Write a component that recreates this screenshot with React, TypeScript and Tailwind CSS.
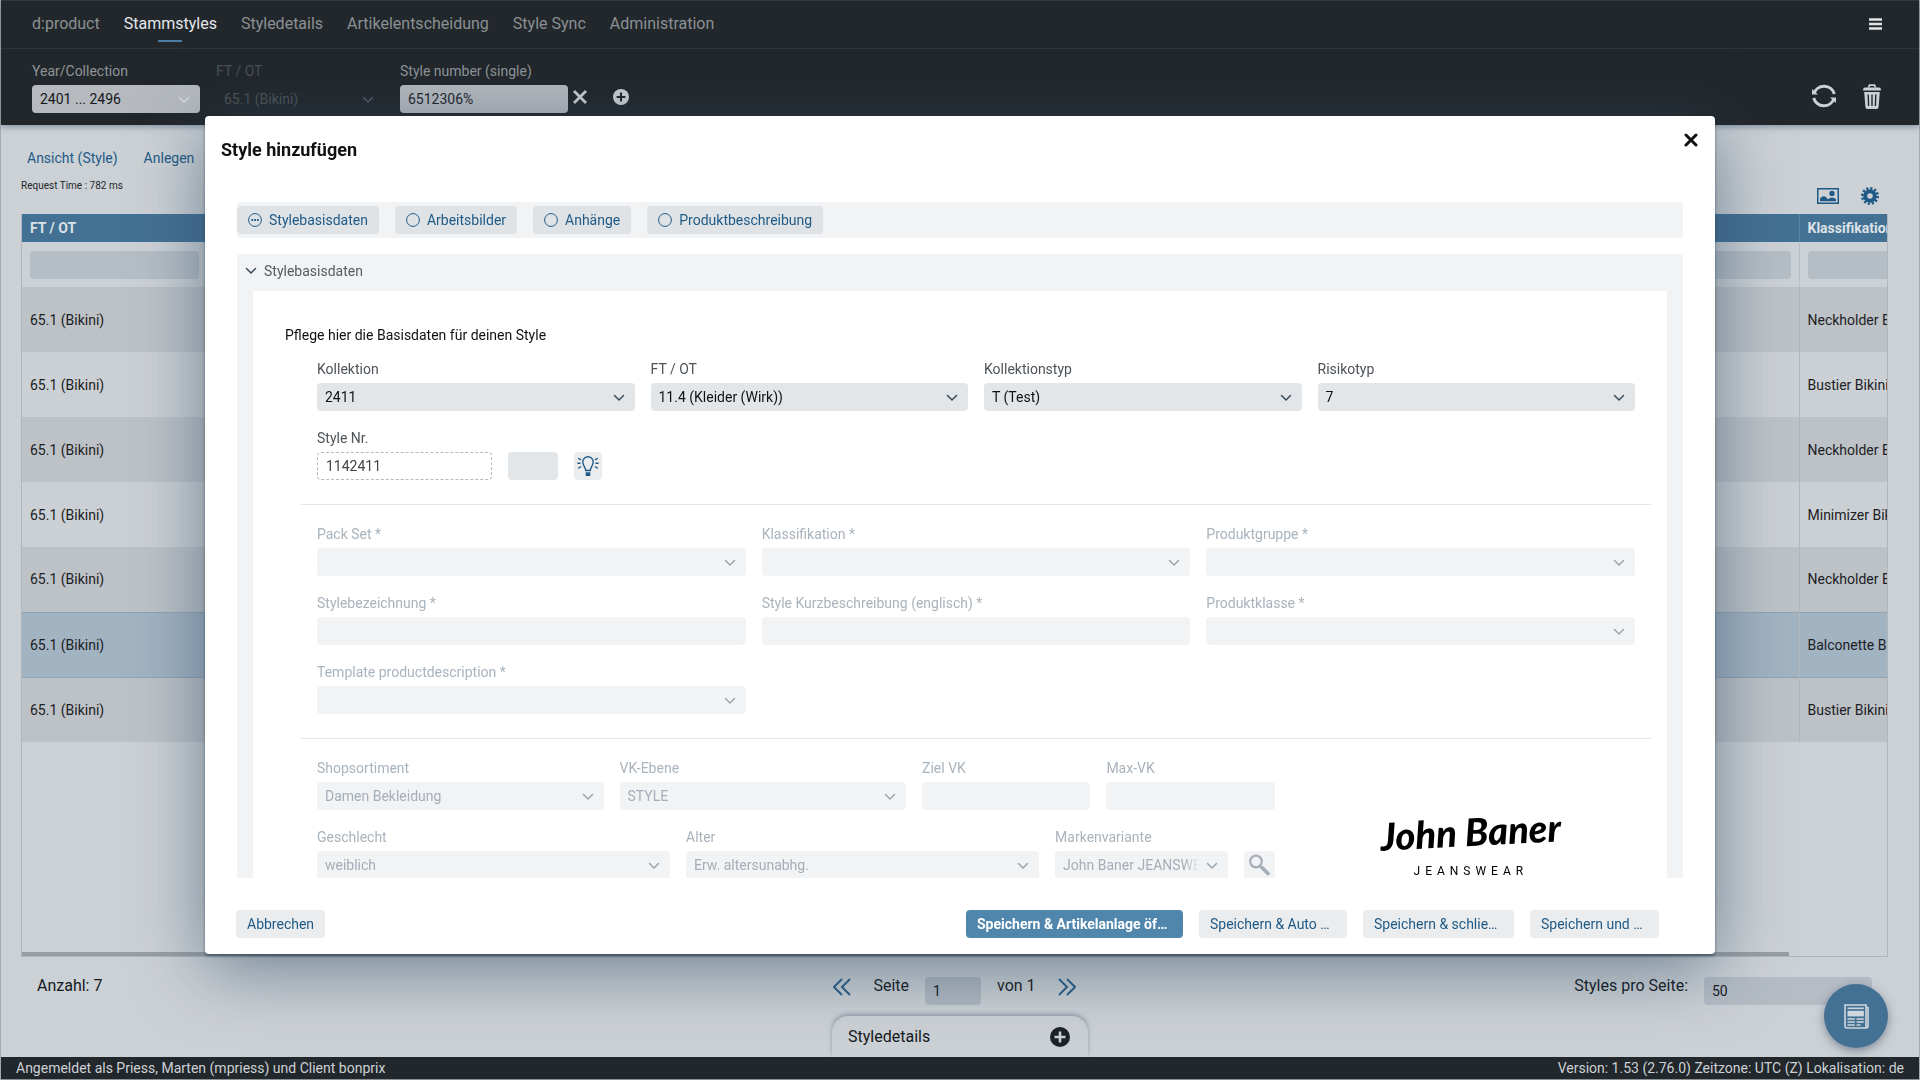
import React, { useId } from 'react';

const NAV_ITEMS = ['d:product', 'Stammstyles', 'Styledetails', 'Artikelentscheidung', 'Style Sync', 'Administration'];

const ROWS = [
  { ft: '65.1 (Bikini)', klass: 'Neckholder Bikini' },
  { ft: '65.1 (Bikini)', klass: 'Bustier Bikini' },
  { ft: '65.1 (Bikini)', klass: 'Neckholder Bikini' },
  { ft: '65.1 (Bikini)', klass: 'Minimizer Bikini' },
  { ft: '65.1 (Bikini)', klass: 'Neckholder Bikini' },
  { ft: '65.1 (Bikini)', klass: 'Balconette Bikini', selected: true },
  { ft: '65.1 (Bikini)', klass: 'Bustier Bikini' },
];

function ChevronDown({ className = '' }: { className?: string }) {
  return (
    <svg viewBox="0 0 12 8" className={`w-3 h-2 ${className}`} fill="none" stroke="currentColor" strokeWidth="1.5" strokeLinecap="round">
      <path d="M1.5 1.5 L6 6 L10.5 1.5" />
    </svg>
  );
}

function PlusCircle({ className, cross }: { className: string; cross: string }) {
  return (
    <svg viewBox="0 0 20 20" className={className}>
      <circle cx="10" cy="10" r="10" fill="currentColor" />
      <path d="M10 4.5 V15.5 M4.5 10 H15.5" stroke={cross} strokeWidth="2.6" />
    </svg>
  );
}

function CloseIcon({ className }: { className: string }) {
  return (
    <svg viewBox="0 0 14 14" className={className} fill="none" stroke="currentColor" strokeWidth="3" strokeLinecap="round">
      <path d="M2 2 L12 12 M12 2 L2 12" />
    </svg>
  );
}

function RefreshIcon() {
  return (
    <svg viewBox="0 0 26 26" className="w-[26px] h-[26px]">
      <g fill="none" stroke="currentColor" strokeWidth="3">
        <path d="M3 10.5 A10.6 10.6 0 0 1 23.3 11" />
        <path d="M23 15.5 A10.6 10.6 0 0 1 2.7 15" />
      </g>
      <path d="M1 6 V11.6 H7 Z" fill="currentColor" />
      <path d="M25 20 V14.4 H19 Z" fill="currentColor" />
    </svg>
  );
}

function TrashIcon() {
  return (
    <svg viewBox="0 0 18 25" className="w-[18px] h-[25px]">
      <path d="M5.5 3.5 L6.5 1.2 H11.5 L12.5 3.5" fill="none" stroke="currentColor" strokeWidth="1.8" />
      <path d="M2 3.5 H16 Q18 3.5 18 6.5 H0 Q0 3.5 2 3.5 Z" fill="currentColor" />
      <path d="M1.2 8 H16.8 L15.6 23 Q15.4 25 13.6 25 H4.4 Q2.6 25 2.4 23 Z" fill="currentColor" />
      <path d="M5.2 10.5 L5.6 22 M9 10.5 V22 M12.8 10.5 L12.4 22" stroke="#22272b" strokeWidth="1.4" />
    </svg>
  );
}

function ImageIcon() {
  return (
    <svg viewBox="0 0 22 16" className="w-[22px] h-4">
      <rect x="0.75" y="0.75" width="20.5" height="14.5" fill="none" stroke="currentColor" strokeWidth="1.5" />
      <circle cx="15" cy="5.4" r="2.6" fill="currentColor" />
      <path d="M3 13.2 V10.6 Q6.5 6.5 9.5 9.8 L11 11.2 Q15 7.8 19 11 V13.2 Z" fill="currentColor" />
    </svg>
  );
}

function GearIcon() {
  return (
    <svg viewBox="0 0 18 18" className="w-[18px] h-[18px]" fill="none" stroke="currentColor">
      <circle cx="9" cy="9" r="4.8" strokeWidth="4" />
      <circle cx="9" cy="9" r="7.7" strokeWidth="2.6" strokeDasharray="2.2 1.83" />
    </svg>
  );
}

function BulbIcon() {
  return (
    <svg viewBox="0 0 22 22" className="w-[22px] h-[22px]" fill="none" stroke="currentColor" strokeWidth="1.4" strokeLinecap="round">
      <path d="M8.7 15.5 C8.7 12.5 5.8 11 5.8 7 A5.2 5.2 0 0 1 16.2 7 C16.2 11 13.3 12.5 13.3 15.5 Z" />
      <path d="M9.6 18.2 H12.4 V20.2 H9.6 Z" fill="currentColor" strokeWidth="1.8" />
      <path d="M0.9 8.3 H3 M1.6 3.5 L3.6 4.6 M1.6 13 L3.6 11.9 M21.1 8.3 H19 M20.4 3.5 L18.4 4.6 M20.4 13 L18.4 11.9" />
    </svg>
  );
}

function SearchIcon() {
  return (
    <svg viewBox="0 0 22 22" className="w-[22px] h-[22px]" fill="none" stroke="currentColor">
      <circle cx="8" cy="7.5" r="5.8" strokeWidth="2.2" />
      <path d="M12 11.8 L14 13.8" strokeWidth="2" />
      <path d="M14.2 13.8 L20 19.6" strokeWidth="3.6" strokeLinecap="round" />
    </svg>
  );
}

function NewsIcon() {
  return (
    <svg viewBox="0 0 25 25" className="w-[25px] h-[25px]" fill="none" stroke="currentColor" strokeWidth="1.6">
      <path d="M22 3.5 H24 V22 Q24 24 22 24 H3 Q1 24 1 22 V1 H22 V22 Q22 24 23 23.4" />
      <path d="M3.5 4.3 H19.8" />
      <rect x="3.5" y="6.8" width="16.4" height="5.6" fill="currentColor" stroke="none" />
      <path d="M3.5 15 H10.8 M3.5 18 H10.8 M3.5 21 H10.8 M12.6 15 H19.8 M12.6 18 H19.8 M12.6 21 H16.5" />
    </svg>
  );
}

function DoubleChevron({ flip = false }: { flip?: boolean }) {
  return (
    <svg viewBox="0 0 18 18" className="w-[18px] h-[18px]" fill="none" stroke="currentColor" strokeWidth="2">
      <path d={flip ? 'M1 1 L9 9 L1 17 M9 1 L17 9 L9 17' : 'M17 1 L9 9 L17 17 M9 1 L1 9 L9 17'} />
    </svg>
  );
}

type FieldProps = {
  label: string;
  value?: string;
  select?: boolean;
  disabled?: boolean;
  dashed?: boolean;
  fade?: boolean;
  className?: string;
};

function Field({ label, value = '', select, disabled, dashed, fade, className = '' }: FieldProps) {
  const id = useId();
  const look = disabled ? 'bg-[#f2f3f5] text-[#a4aeb8]' : dashed ? 'border border-dashed border-[#b4babf] text-[#444]' : 'bg-[#e3e6e9] text-[#111]';
  return (
    <div className={`min-w-0 ${className}`}>
      <label htmlFor={id} className={`block h-5 leading-[22px] mb-[5px] whitespace-nowrap ${disabled ? 'text-[#a9b3bc]' : 'text-[#4d5358]'}`}>
        {label}
      </label>
      <div className="relative">
        {select ? (
          <select id={id} disabled={disabled} defaultValue={value} className={`appearance-none block w-full h-7 rounded-sm pl-2 pr-7 ${look}`}>
            <option value={value}>{value}</option>
          </select>
        ) : (
          <input id={id} type="text" disabled={disabled} defaultValue={value} className={`block w-full h-7 rounded-sm px-2 ${look}`} />
        )}
        {fade && <span className="absolute right-7 top-0 h-7 w-4 bg-linear-to-r from-[#f2f3f5]/0 to-[#f2f3f5]" />}
        {select && <ChevronDown className={`absolute right-[10px] top-[11px] pointer-events-none ${disabled ? 'text-[#9aa5b0]' : 'text-[#3a4a5a]'}`} />}
      </div>
    </div>
  );
}

function TabButton({ children, active }: { children: React.ReactNode; active?: boolean }) {
  return (
    <button type="button" className="flex items-center gap-[7px] h-7 px-[11px] rounded-sm bg-[#dfe3e6] text-[#1f5a87]">
      <svg viewBox="0 0 14 14" className="w-[14px] h-[14px]" fill="none" stroke="currentColor">
        <circle cx="7" cy="7" r="6.4" />
        {active && <path d="M3.4 7 H5.1 M6.2 7 H7.9 M9 7 H10.7" strokeWidth="1.8" />}
      </svg>
      {children}
    </button>
  );
}

function TopBar() {
  return (
    <header className="bg-[#22272b] border-t border-[#33383c] shadow-[0_2px_6px_rgba(60,85,110,0.5)]">
      <div className="flex items-center justify-between h-12 pl-[31px] pr-[37px] pb-px border-b border-[#30353a]">
        <nav className="flex items-center gap-6 h-full text-base">
          {NAV_ITEMS.map((item) => (
            <a key={item} href="#" className={`relative flex items-center h-full ${item === 'Stammstyles' ? 'text-[#e4e8eb]' : 'text-[#8b9094]'}`}>
              {item}
              {item === 'Stammstyles' && <span className="absolute left-1/2 -translate-x-1/2 bottom-[5px] w-6 h-[2px] bg-[#4a7ea5]" />}
            </a>
          ))}
        </nav>
        <button type="button" aria-label="Menu" className="text-[#dfe3e6]">
          <svg viewBox="0 0 13 12" className="w-[13px] h-3" stroke="currentColor" strokeWidth="2.4">
            <path d="M0 1.5 H13 M0 6 H13 M0 10.5 H13" />
          </svg>
        </button>
      </div>
      <div className="flex items-start h-[76px] pt-3 pl-[31px] pr-[38px]">
        <div className="w-[168px]">
          <label htmlFor="year" className="block h-5 leading-5 mb-1 text-[#8f9498]">Year/Collection</label>
          <div className="relative">
            <select id="year" className="appearance-none block w-full h-7 rounded-sm pl-2 pr-7 bg-[#b6babf] text-[#15181b]">
              <option>2401 ... 2496</option>
            </select>
            <ChevronDown className="absolute right-[10px] top-[11px] text-[#d6dade] pointer-events-none" />
          </div>
        </div>
        <div className="w-[168px] ml-4">
          <label htmlFor="ft" className="block h-5 leading-5 mb-1 text-[#4b5054]">FT / OT</label>
          <div className="relative">
            <select id="ft" disabled className="appearance-none block w-full h-7 rounded-sm pl-2 pr-7 text-[#4b5258]">
              <option>65.1 (Bikini)</option>
            </select>
            <ChevronDown className="absolute right-[10px] top-[11px] text-[#565c61] pointer-events-none" />
          </div>
        </div>
        <div className="w-[168px] ml-4">
          <label htmlFor="stylenr" className="block h-5 leading-5 mb-1 text-[#8f9498]">Style number (single)</label>
          <input id="stylenr" type="text" defaultValue="6512306%" className="block w-full h-7 rounded-sm px-2 bg-[#b6babf] text-[#22262a]" />
        </div>
        <div className="flex items-center gap-[26px] ml-[5px] mt-7">
          <button type="button" aria-label="Filter entfernen" className="text-[#ccd1d5]">
            <svg viewBox="0 0 14 14" className="w-[14px] h-[14px]" stroke="currentColor" strokeWidth="2.8">
              <path d="M1 1 L13 13 M13 1 L1 13" />
            </svg>
          </button>
          <button type="button" aria-label="Filter hinzufügen" className="text-[#ccd1d5]">
            <PlusCircle className="w-4 h-4" cross="#22272b" />
          </button>
        </div>
        <div className="flex items-center gap-[26px] ml-auto mt-[22px] text-[#ccd1d5]">
          <button type="button" aria-label="Aktualisieren"><RefreshIcon /></button>
          <button type="button" aria-label="Löschen"><TrashIcon /></button>
        </div>
      </div>
    </header>
  );
}

function StyleTable() {
  return (
    <div className="flex-1 flex flex-col ml-5 mr-[31px] border-x border-b border-[#b0b6bb] overflow-hidden">
      <table className="w-full table-fixed border-collapse">
        <thead>
          <tr className="h-7 bg-[#437194] text-left text-[#dde2e6]">
            <th className="w-[186px] pl-2 font-bold">FT / OT</th>
            <th></th>
            <th className="w-[88px] pl-2 font-bold border-l border-[#5a83a3] overflow-hidden whitespace-nowrap">Klassifikation</th>
          </tr>
          <tr className="h-[45px]">
            <td className="pl-2">
              <input aria-label="Filter FT / OT" className="block w-[169px] h-7 rounded-sm bg-[#b6bec5]" />
            </td>
            <td className="px-2">
              <input aria-label="Filter" className="block w-full h-7 rounded-sm bg-[#b6bec5]" />
            </td>
            <td className="pl-2 border-l border-[#b8bec3] overflow-hidden">
              <input aria-label="Filter Klassifikation" className="block w-[168px] h-7 rounded-sm bg-[#b6bec5]" />
            </td>
          </tr>
        </thead>
        <tbody>
          {ROWS.map((row, i) => (
            <tr
              key={i}
              className={`h-[65px] text-[#1c2024] ${row.selected ? 'bg-[#a2b3c2] border-y border-[#8fa5b7]' : i % 2 === 0 ? 'bg-[#bdc2c7]' : 'bg-[#cbd0d4]'}`}
            >
              <td className="pl-2">{row.ft}</td>
              <td></td>
              <td className="pl-2 border-l border-[#b0b6bc] overflow-hidden whitespace-nowrap">{row.klass}</td>
            </tr>
          ))}
        </tbody>
      </table>
      <div className="mt-auto h-1 mr-[98px] bg-[#999ea3]" />
    </div>
  );
}

function Logo() {
  return (
    <div className="flex flex-col items-center self-end text-black">
      <span className="mb-2 font-['Lato'] font-black italic text-[38px] leading-[48px] -rotate-3 whitespace-nowrap">John Baner</span>
      <span className="text-xs leading-4 tracking-[5px]">JEANSWEAR</span>
    </div>
  );
}

function StyleDialog() {
  return (
    <div className="fixed inset-0 z-20 flex px-[205px] pt-[116px] pb-[126px]">
      <div
        role="dialog"
        aria-labelledby="dialog-title"
        className="flex-1 min-w-0 flex flex-col bg-white rounded shadow-[0_2px_3px_rgba(40,55,70,0.6),0_14px_70px_rgba(45,72,98,0.6)]"
      >
        <div className="flex items-start justify-between h-[86px] shrink-0 pl-4 pr-[17px] pt-[17px]">
          <h2 id="dialog-title" className="text-lg leading-[34px] font-bold text-[#111]">Style hinzufügen</h2>
          <button type="button" aria-label="Schließen" className="text-[#111]">
            <CloseIcon className="w-[14px] h-[14px]" />
          </button>
        </div>

        <div className="flex-1 min-h-0 overflow-hidden mx-8">
          <div className="flex items-center gap-4 h-9 rounded bg-[#f2f3f5]">
            <TabButton active>Stylebasisdaten</TabButton>
            <TabButton>Arbeitsbilder</TabButton>
            <TabButton>Anhänge</TabButton>
            <TabButton>Produktbeschreibung</TabButton>
          </div>

          <section className="mt-4 px-4 pb-4 rounded bg-[#f2f3f5]">
            <h3 className="-ml-2 flex items-center gap-[7px] h-[37px] pb-1 text-[#565b60]">
              <ChevronDown className="text-[#3a4a5a]" />
              Stylebasisdaten
            </h3>
            <div className="bg-white pt-[34px] pb-8">
              <p className="px-8 mb-[13px] leading-5 text-[#111]">Pflege hier die Basisdaten für deinen Style</p>

              <div className="flex flex-col gap-4 pl-16 pr-8">
                <div className="grid grid-cols-4 gap-4">
                  <Field label="Kollektion" value="2411" select />
                  <Field label="FT / OT" value="11.4 (Kleider (Wirk))" select />
                  <Field label="Kollektionstyp" value="T (Test)" select />
                  <Field label="Risikotyp" value="7" select />
                </div>
                <div className="flex items-end gap-4">
                  <Field label="Style Nr." value="1142411" dashed className="w-[175px]" />
                  <input aria-label="Style Nr. Zusatz" className="w-[50px] h-7 rounded-sm bg-[#e3e6e9]" />
                  <button type="button" aria-label="Vorschlag" className="flex items-center justify-center w-7 h-7 rounded-sm bg-[#ebecee] text-[#1f5a87]">
                    <BulbIcon />
                  </button>
                </div>
              </div>

              <hr className="mt-6 mb-[18px] ml-12 mr-4 border-0 h-px bg-[#e3e5e8]" />

              <div className="grid grid-cols-3 gap-4 pl-16 pr-8">
                <Field label="Pack Set *" select disabled />
                <Field label="Klassifikation *" select disabled />
                <Field label="Produktgruppe *" select disabled />
                <Field label="Stylebezeichnung *" disabled />
                <Field label="Style Kurzbeschreibung (englisch) *" disabled />
                <Field label="Produktklasse *" select disabled />
                <Field label="Template productdescription *" select disabled />
              </div>

              <hr className="mt-6 mb-[18px] ml-12 mr-4 border-0 h-px bg-[#e3e5e8]" />

              <div className="grid grid-cols-[957fr_360fr] gap-4 pl-16 pr-4">
                <div className="flex flex-col gap-4">
                  <div className="grid grid-cols-[286fr_286fr_168fr_168fr] gap-4">
                    <Field label="Shopsortiment" value="Damen Bekleidung" select disabled />
                    <Field label="VK-Ebene" value="STYLE" select disabled />
                    <Field label="Ziel VK" disabled />
                    <Field label="Max-VK" disabled />
                  </div>
                  <div className="grid grid-cols-[352fr_352fr_172fr_31fr] items-end gap-4">
                    <Field label="Geschlecht" value="weiblich" select disabled />
                    <Field label="Alter" value="Erw. altersunabhg." select disabled />
                    <Field label="Markenvariante" value="John Baner JEANSWEAR" select disabled fade />
                    <button type="button" aria-label="Suchen" className="flex items-center justify-center h-7 rounded-sm bg-[#f2f3f5] text-[#a4aeb8]">
                      <SearchIcon />
                    </button>
                  </div>
                </div>
                <Logo />
              </div>
            </div>
          </section>
        </div>

        <div className="flex items-center gap-4 shrink-0 pt-8 pb-4 pl-[31px] pr-14 text-[#1f5a87] text-left whitespace-nowrap">
          <button type="button" className="h-7 px-[11px] rounded-sm bg-[#ebecee] mr-auto">Abbrechen</button>
          <button type="button" className="w-[217px] h-7 px-[11px] rounded-sm bg-[#5086ab] text-white font-bold text-left">Speichern &amp; Artikelanlage öf…</button>
          <button type="button" className="w-[148px] h-7 px-[11px] rounded-sm bg-[#ebecee] text-left">Speichern &amp; Auto …</button>
          <button type="button" className="w-[151px] h-7 px-[11px] rounded-sm bg-[#ebecee] text-left">Speichern &amp; schlie…</button>
          <button type="button" className="w-[129px] h-7 px-[11px] rounded-sm bg-[#ebecee] text-left">Speichern und …</button>
        </div>
      </div>
    </div>
  );
}

export default function App() {
  return (
    <div className="min-h-screen flex flex-col bg-[#ccd1d5] border-x border-[#a5aaaf] font-['Roboto',sans-serif] text-sm">
      <TopBar />

      <main className="flex-1 flex flex-col">
        <div className="flex justify-between h-[89px] pt-5 pl-5 pr-10 text-[#1f5a87]">
          <div>
            <div className="flex gap-[26px] pl-[6px] leading-[26px]">
              <a href="#">Ansicht (Style)</a>
              <a href="#">Anlegen</a>
            </div>
            <p className="mt-[3px] text-[10px] leading-6 text-[#22262a]">Request Time : 782 ms</p>
          </div>
          <div className="flex items-center gap-[22px] self-end mb-[9px]">
            <button type="button" aria-label="Bilder"><ImageIcon /></button>
            <button type="button" aria-label="Einstellungen"><GearIcon /></button>
          </div>
        </div>

        <StyleTable />

        <div className="grid grid-cols-[1fr_auto_1fr] items-start h-[59px] pt-5 pl-9 pr-[47px] text-base leading-[18px] text-[#15191d]">
          <span>Anzahl: 7</span>
          <div className="flex items-start">
            <button type="button" aria-label="Zurück" className="mr-[22px] mt-px text-[#2a5f8a]"><DoubleChevron /></button>
            <label htmlFor="page" className="mr-4">Seite</label>
            <input id="page" defaultValue="1" className="w-14 h-7 mr-4 px-2 rounded-sm bg-[#b1b9c1] text-sm" />
            <span>von 1</span>
            <button type="button" aria-label="Weiter" className="ml-[22px] mt-px text-[#2a5f8a]"><DoubleChevron flip /></button>
          </div>
          <div className="flex items-start justify-end gap-4">
            <label htmlFor="perpage">Styles pro Seite:</label>
            <select id="perpage" className="appearance-none w-[168px] h-7 px-2 rounded-sm bg-[#b5bcc4] text-sm">
              <option>50</option>
            </select>
          </div>
        </div>

        <div className="self-center flex items-center justify-between w-64 h-[41px] pl-4 pr-[18px] rounded-t-2xl bg-[#ccd1d5] text-base text-[#15191d] shadow-[0_-2px_4px_rgba(60,80,105,0.4)]">
          Styledetails
          <button type="button" aria-label="Styledetails öffnen" className="text-[#1c2125]">
            <PlusCircle className="w-5 h-5" cross="#ccd1d5" />
          </button>
        </div>
      </main>

      <footer className="relative flex items-center justify-between h-[23px] px-[15px] bg-[#22272b] border-b border-[#8d9297] text-[#ccd1d5]">
        <span>Angemeldet als Priess, Marten (mpriess) und Client bonprix</span>
        <span>Version: 1.53 (2.76.0) Zeitzone: UTC (Z) Lokalisation: de</span>
      </footer>

      <button
        type="button"
        aria-label="News"
        className="fixed right-8 bottom-8 flex items-center justify-center w-16 h-16 rounded-full bg-[#437194] text-[#cfd6dc] shadow-[0_3px_10px_rgba(50,70,95,0.5)]"
      >
        <NewsIcon />
      </button>

      <StyleDialog />
    </div>
  );
}
